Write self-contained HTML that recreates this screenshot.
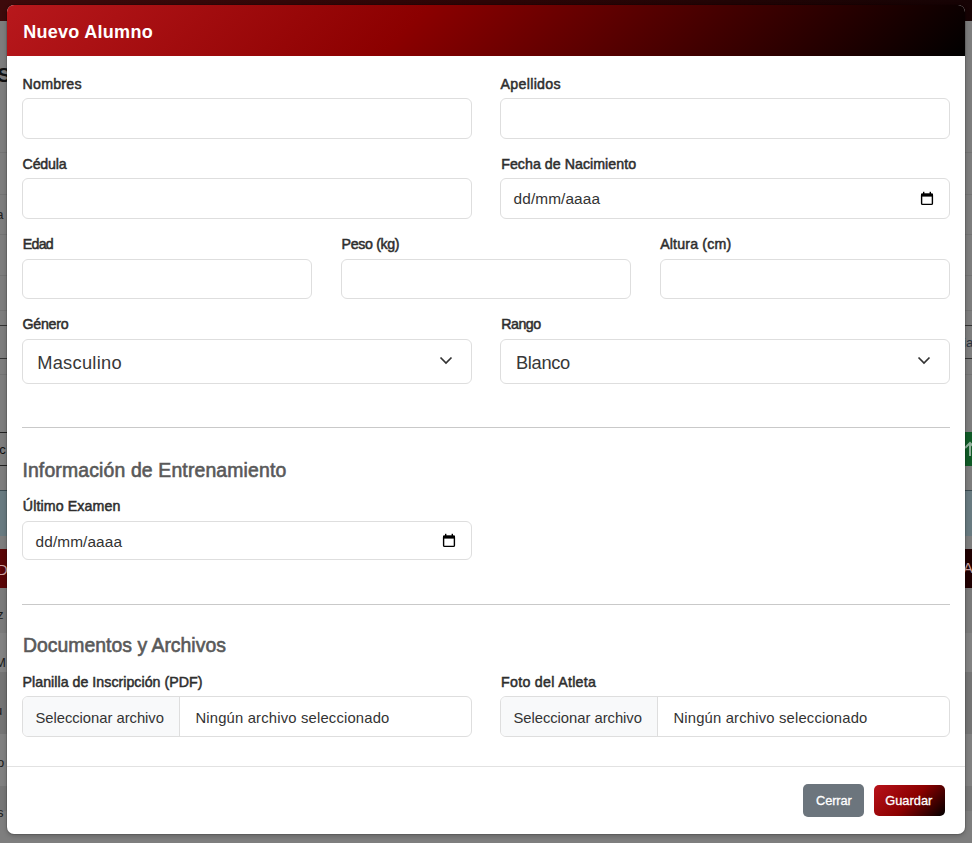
<!DOCTYPE html>
<html><head><meta charset="utf-8"><style>
html,body{margin:0;padding:0;width:972px;height:843px;overflow:hidden;background:#7d7d7d;font-family:"Liberation Sans",sans-serif;}
.t{position:absolute;white-space:nowrap;line-height:1.149;}
#modal{position:absolute;left:7px;top:5px;width:958px;height:829px;background:#fff;border-radius:7px;box-shadow:0 0 0 1px rgba(0,0,0,.12),0 2px 5px rgba(0,0,0,.22);overflow:hidden}
#hdr{position:absolute;left:0;top:0;width:958px;height:51px;background:linear-gradient(135deg,#b8181c 0%,#8b0000 42%,#000 100%)}
</style></head><body>
<div style="position:absolute;left:0px;top:0px;width:972px;height:21px;background:linear-gradient(90deg,#3d0a0b,#2c0506 50%,#160304)"></div><div style="position:absolute;left:0px;top:152px;width:972px;height:1px;background:#737373"></div><div style="position:absolute;left:0px;top:194px;width:972px;height:1px;background:#737373"></div><div style="position:absolute;left:0px;top:234px;width:972px;height:1px;background:#737373"></div><div style="position:absolute;left:0px;top:275px;width:972px;height:1px;background:#737373"></div><div style="position:absolute;left:0px;top:310px;width:972px;height:1px;background:#737373"></div><div style="position:absolute;left:0px;top:374px;width:972px;height:1px;background:#737373"></div><div style="position:absolute;left:0px;top:325px;width:972px;height:1px;background:#333"></div><div style="position:absolute;left:0px;top:358px;width:972px;height:1px;background:#333"></div><div style="position:absolute;left:0px;top:432px;width:972px;height:1px;background:#222"></div><div style="position:absolute;left:0px;top:465px;width:972px;height:1px;background:#222"></div><div style="position:absolute;left:940px;top:432px;width:32px;height:34px;background:#0f5a26"></div><div style="position:absolute;left:0px;top:490px;width:972px;height:45px;background:#687a80;border-top:1px solid #3a4a50"></div><div style="position:absolute;left:0px;top:549px;width:972px;height:39px;background:linear-gradient(90deg,#5a0607,#3a0304 70%,#200102)"></div><div style="position:absolute;left:0px;top:588px;width:972px;height:45px;background:#7a7a7a"></div><div style="position:absolute;left:0px;top:633px;width:972px;height:39px;background:#828282"></div><div style="position:absolute;left:0px;top:672px;width:972px;height:62px;background:#747474"></div><div style="position:absolute;left:0px;top:734px;width:972px;height:52px;background:#808080"></div><div style="position:absolute;left:0px;top:786px;width:972px;height:25px;background:#767676"></div><div style="position:absolute;left:0px;top:811px;width:972px;height:32px;background:#7e7e7e"></div><div class="t" style="left:-3px;top:63.0px;font-size:21px;font-weight:700;color:#111">S</div><div class="t" style="left:-8px;top:208.2px;font-size:13px;font-weight:400;color:#222">ra</div><div class="t" style="left:-8px;top:443.2px;font-size:13px;font-weight:400;color:#111">ac</div><div class="t" style="left:-3px;top:561.4px;font-size:15px;font-weight:400;color:#c9a0a0">D</div><div class="t" style="left:-3px;top:608.2px;font-size:13px;font-weight:400;color:#1a1a1a">z</div><div class="t" style="left:-5px;top:656.2px;font-size:13px;font-weight:400;color:#1a1a1a">M</div><div class="t" style="left:-5px;top:704.2px;font-size:13px;font-weight:400;color:#1a1a1a">u</div><div class="t" style="left:-3px;top:756.2px;font-size:13px;font-weight:400;color:#1a1a1a">o</div><div class="t" style="left:-3px;top:806.2px;font-size:13px;font-weight:400;color:#1a1a1a">s</div><div class="t" style="left:963px;top:336.2px;font-size:13px;font-weight:400;color:#2a3340">ia</div><svg style="position:absolute;left:964px;top:441px" width="10" height="16" viewBox="0 0 10 16"><path d="M6 15 V2 M1 7 L6 2 L11 7" fill="none" stroke="#8fb09a" stroke-width="2"/></svg><div class="t" style="left:963px;top:559.4px;font-size:15px;font-weight:400;color:#c9a0a0">A</div>
<div id="modal"><div id="hdr"></div></div>
<div class="t" style="left:23.20px;top:21.51px;font-size:18px;font-weight:700;color:#fff;letter-spacing:0.288px;">Nuevo Alumno</div>
<div class="t" style="left:22.60px;top:76.15px;font-size:14.2px;font-weight:400;color:#2e2e2e;letter-spacing:0.232px;-webkit-text-stroke:0.5px #2e2e2e;">Nombres</div>
<div class="t" style="left:500.60px;top:76.15px;font-size:14.2px;font-weight:400;color:#2e2e2e;letter-spacing:0.297px;-webkit-text-stroke:0.5px #2e2e2e;">Apellidos</div>
<div class="t" style="left:22.60px;top:156.15px;font-size:14.2px;font-weight:400;color:#2e2e2e;letter-spacing:-0.200px;-webkit-text-stroke:0.5px #2e2e2e;">Cédula</div>
<div class="t" style="left:501.20px;top:156.15px;font-size:14.2px;font-weight:400;color:#2e2e2e;letter-spacing:0.045px;-webkit-text-stroke:0.5px #2e2e2e;">Fecha de Nacimiento</div>
<div class="t" style="left:22.80px;top:236.15px;font-size:14.2px;font-weight:400;color:#2e2e2e;letter-spacing:-0.722px;-webkit-text-stroke:0.5px #2e2e2e;">Edad</div>
<div class="t" style="left:341.60px;top:236.15px;font-size:14.2px;font-weight:400;color:#2e2e2e;letter-spacing:-0.346px;-webkit-text-stroke:0.5px #2e2e2e;">Peso (kg)</div>
<div class="t" style="left:660.20px;top:236.15px;font-size:14.2px;font-weight:400;color:#2e2e2e;letter-spacing:0.157px;-webkit-text-stroke:0.5px #2e2e2e;">Altura (cm)</div>
<div class="t" style="left:22.60px;top:316.15px;font-size:14.2px;font-weight:400;color:#2e2e2e;letter-spacing:-0.273px;-webkit-text-stroke:0.5px #2e2e2e;">Género</div>
<div class="t" style="left:501.20px;top:316.15px;font-size:14.2px;font-weight:400;color:#2e2e2e;letter-spacing:-0.461px;-webkit-text-stroke:0.5px #2e2e2e;">Rango</div>
<div class="t" style="left:22.80px;top:498.15px;font-size:14.2px;font-weight:400;color:#2e2e2e;letter-spacing:0.119px;-webkit-text-stroke:0.5px #2e2e2e;">Último Examen</div>
<div class="t" style="left:22.60px;top:673.65px;font-size:14.2px;font-weight:400;color:#2e2e2e;letter-spacing:0.030px;-webkit-text-stroke:0.5px #2e2e2e;">Planilla de Inscripción (PDF)</div>
<div class="t" style="left:501.00px;top:673.65px;font-size:14.2px;font-weight:400;color:#2e2e2e;letter-spacing:0.301px;-webkit-text-stroke:0.5px #2e2e2e;">Foto del Atleta</div>
<div style="position:absolute;left:22px;top:98px;width:449.5px;height:41px;box-sizing:border-box;border:1px solid #dedede;border-radius:6px;background:#fff"></div>
<div style="position:absolute;left:500px;top:98px;width:450px;height:41px;box-sizing:border-box;border:1px solid #dedede;border-radius:6px;background:#fff"></div>
<div style="position:absolute;left:22px;top:178px;width:449.5px;height:41px;box-sizing:border-box;border:1px solid #dedede;border-radius:6px;background:#fff"></div>
<div style="position:absolute;left:500px;top:178px;width:450px;height:41px;box-sizing:border-box;border:1px solid #dedede;border-radius:6px;background:#fff"></div>
<div style="position:absolute;left:22px;top:259px;width:290px;height:40px;box-sizing:border-box;border:1px solid #dedede;border-radius:6px;background:#fff"></div>
<div style="position:absolute;left:341px;top:259px;width:290px;height:40px;box-sizing:border-box;border:1px solid #dedede;border-radius:6px;background:#fff"></div>
<div style="position:absolute;left:660px;top:259px;width:290px;height:40px;box-sizing:border-box;border:1px solid #dedede;border-radius:6px;background:#fff"></div>
<div style="position:absolute;left:22px;top:339px;width:449.5px;height:45px;box-sizing:border-box;border:1px solid #dedede;border-radius:6px;background:#fff"></div>
<div style="position:absolute;left:500px;top:339px;width:450px;height:45px;box-sizing:border-box;border:1px solid #dedede;border-radius:6px;background:#fff"></div>
<div style="position:absolute;left:22px;top:521px;width:449.5px;height:39px;box-sizing:border-box;border:1px solid #dedede;border-radius:6px;background:#fff"></div>
<div class="t" style="left:513.60px;top:190.46px;font-size:15.4px;font-weight:400;color:#333;letter-spacing:0.088px;">dd/mm/aaaa</div>
<div class="t" style="left:35.60px;top:533.06px;font-size:15.4px;font-weight:400;color:#333;letter-spacing:0.088px;">dd/mm/aaaa</div>
<svg style="position:absolute;left:920px;top:191px" width="14" height="15" viewBox="0 0 14 15"><rect x="1.6" y="3.2" width="10.8" height="10.2" rx="1" fill="none" stroke="#000" stroke-width="1.4"/><rect x="1" y="2.6" width="12" height="3" fill="#000"/><rect x="3" y="0.8" width="1.4" height="2.5" fill="#000"/><rect x="9.6" y="0.8" width="1.4" height="2.5" fill="#000"/></svg>
<svg style="position:absolute;left:442px;top:533px" width="14" height="15" viewBox="0 0 14 15"><rect x="1.6" y="3.2" width="10.8" height="10.2" rx="1" fill="none" stroke="#000" stroke-width="1.4"/><rect x="1" y="2.6" width="12" height="3" fill="#000"/><rect x="3" y="0.8" width="1.4" height="2.5" fill="#000"/><rect x="9.6" y="0.8" width="1.4" height="2.5" fill="#000"/></svg>
<div class="t" style="left:37.20px;top:352.44px;font-size:18.3px;font-weight:400;color:#383838;letter-spacing:0.264px;">Masculino</div>
<div class="t" style="left:516.00px;top:352.44px;font-size:18.3px;font-weight:400;color:#383838;letter-spacing:-0.331px;">Blanco</div>
<svg style="position:absolute;left:917px;top:355.8px" width="14" height="9" viewBox="0 0 14 9"><path d="M1.5 1.5 L7 7 L12.5 1.5" fill="none" stroke="#333" stroke-width="1.7"/></svg>
<svg style="position:absolute;left:439px;top:355.8px" width="14" height="9" viewBox="0 0 14 9"><path d="M1.5 1.5 L7 7 L12.5 1.5" fill="none" stroke="#333" stroke-width="1.7"/></svg>
<div style="position:absolute;left:22px;top:427px;width:928px;height:1px;background:#c9c9c9"></div>
<div style="position:absolute;left:22px;top:604px;width:928px;height:1px;background:#c9c9c9"></div>
<div class="t" style="left:22.40px;top:458.74px;font-size:19.4px;font-weight:400;color:#595959;letter-spacing:0.152px;-webkit-text-stroke:0.6px #595959;">Información de Entrenamiento</div>
<div class="t" style="left:23.00px;top:633.94px;font-size:19.4px;font-weight:400;color:#595959;letter-spacing:0.014px;-webkit-text-stroke:0.6px #595959;">Documentos y Archivos</div>
<div style="position:absolute;left:22px;top:696px;width:449.5px;height:40.5px;box-sizing:border-box;border:1px solid #dedede;border-radius:6px;background:#fff;overflow:hidden"></div>
<div style="position:absolute;left:23px;top:697px;width:156px;height:38.5px;background:#f8f9fa;border-right:1px solid #dedede;border-radius:5px 0 0 5px"></div>
<div style="position:absolute;left:500px;top:696px;width:449.5px;height:40.5px;box-sizing:border-box;border:1px solid #dedede;border-radius:6px;background:#fff;overflow:hidden"></div>
<div style="position:absolute;left:501px;top:697px;width:156px;height:38.5px;background:#f8f9fa;border-right:1px solid #dedede;border-radius:5px 0 0 5px"></div>
<div class="t" style="left:35.40px;top:710.11px;font-size:14.8px;font-weight:400;color:#333;letter-spacing:-0.031px;">Seleccionar archivo</div>
<div class="t" style="left:195.40px;top:710.11px;font-size:14.8px;font-weight:400;color:#333;letter-spacing:0.183px;">Ningún archivo seleccionado</div>
<div class="t" style="left:513.40px;top:710.11px;font-size:14.8px;font-weight:400;color:#333;letter-spacing:-0.031px;">Seleccionar archivo</div>
<div class="t" style="left:673.40px;top:710.11px;font-size:14.8px;font-weight:400;color:#333;letter-spacing:0.183px;">Ningún archivo seleccionado</div>
<div style="position:absolute;left:7px;top:766px;width:958px;height:1px;background:#e2e2e2"></div>
<div style="position:absolute;left:803px;top:784px;width:61px;height:33px;background:#6c757d;border-radius:5px"></div>
<div style="position:absolute;left:874px;top:785px;width:71px;height:31px;background:linear-gradient(135deg,#b8121a 0%,#8b0000 52%,#000 100%);border-radius:5px"></div>
<div class="t" style="left:816.00px;top:794.12px;font-size:12.8px;font-weight:400;color:#fff;letter-spacing:-0.114px;-webkit-text-stroke:0.3px #fff;">Cerrar</div>
<div class="t" style="left:885.20px;top:794.12px;font-size:12.8px;font-weight:400;color:#fff;letter-spacing:0.040px;-webkit-text-stroke:0.3px #fff;">Guardar</div>
</body></html>
